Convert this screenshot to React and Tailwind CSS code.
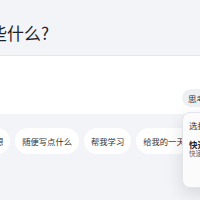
import React from 'react';

const chips = ['写作构想', '随便写点什么', '帮我学习', '给我的一天做计划'];

const App = () => {
  return (
    <div className="relative w-[200px] h-[200px] overflow-hidden bg-[#f3f4f8] font-['Noto_Sans_CJK_SC','Noto_Sans',sans-serif]">
      {/* title */}
      <div className="h-[56px] flex items-center border-b border-[#e4e6eb] pt-[10px]">
        <h1 className="ml-[-27px] text-[17px] leading-none text-[#1f2329] whitespace-nowrap">写些什么?</h1>
      </div>

      {/* input box */}
      <div className="bg-white h-[58px] flex items-end pb-[7px]">
        <div className="w-[182px] shrink-0" />
        <button className="shrink-0 h-[18px] px-[6px] rounded-full bg-[#eef0f4] text-[8.5px] text-[#333] whitespace-nowrap flex items-center">
          思考模式
        </button>
      </div>

      {/* suggestion chips */}
      <div className="flex gap-[5px] mt-[14px] ml-[-37px]">
        {chips.map(c => (
          <span key={c} className="shrink-0 h-[26px] px-[7px] rounded-full bg-white text-[8.3px] text-[#333] whitespace-nowrap flex items-center">
            {c}
          </span>
        ))}
      </div>

      {/* mode dropdown */}
      <div className="absolute left-[182px] top-[112px] w-[120px] h-[76px] bg-[#fbfbfc] border border-[#e3e5ea] rounded-lg shadow-[0_6px_18px_rgba(0,0,0,0.12)] pl-[6px] pt-[8px]">
        <p className="text-[8.5px] text-[#333] leading-none whitespace-nowrap">选择模型</p>
        <p className="mt-[10px] text-[8.5px] font-bold text-[#1f2329] leading-none whitespace-nowrap">快速</p>
        <p className="mt-[2px] text-[6.5px] text-[#666] leading-none whitespace-nowrap">快速回答日常问题</p>
      </div>
    </div>
  );
};

export default App;
